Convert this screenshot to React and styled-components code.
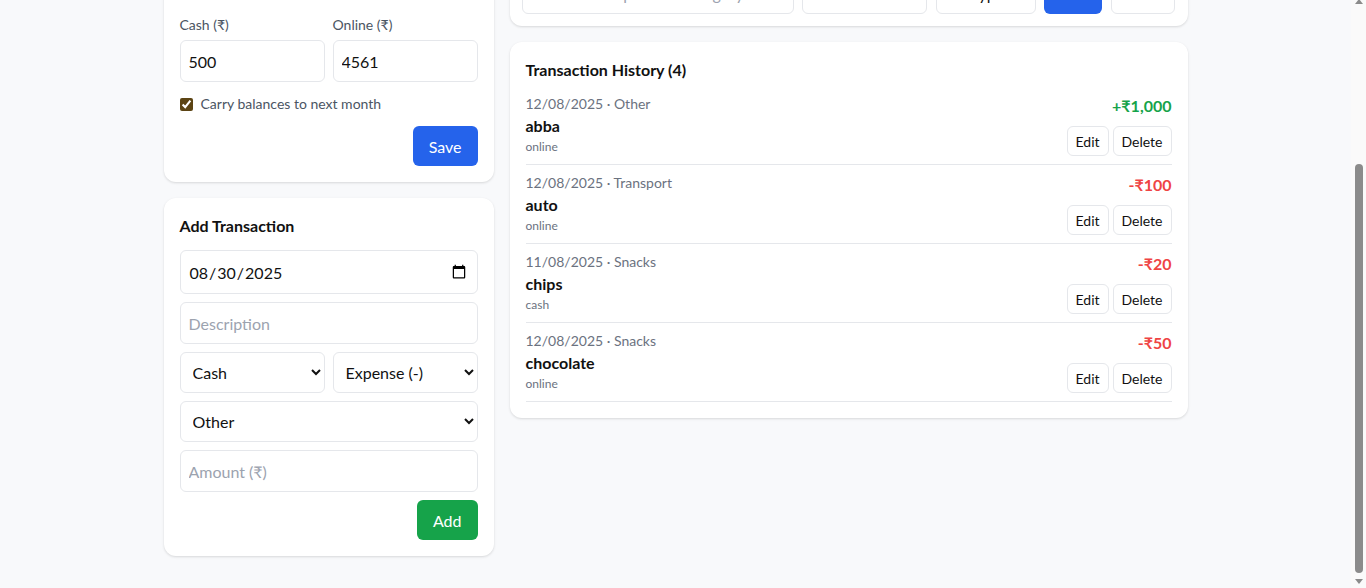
import React, { useLayoutEffect } from "react";
import styled, { createGlobalStyle } from "styled-components";

const GlobalStyle = createGlobalStyle`
  html {
    background: #f8f9fb;
  }
  body {
    margin: 0;
    background: #f8f9fb;
    font-family: Lato, "Noto Sans", "DejaVu Sans", sans-serif;
    line-height: 1.5;
    color: #111827;
  }
  * {
    box-sizing: border-box;
  }
`;

const Outer = styled.div`
  padding-right: 15px;
`;

const Page = styled.div`
  max-width: 1024px;
  margin: 0 auto;
  padding: 24px 0 32px;
`;

const Header = styled.h1`
  margin: 0 0 16px;
  font-size: 28px;
  line-height: 40px;
  font-weight: 700;
`;

const Summary = styled.div`
  display: grid;
  grid-template-columns: repeat(3, 1fr);
  gap: 16px;
  margin-bottom: 16px;
`;

const StatCard = styled.div`
  background: #fff;
  border-radius: 12px;
  box-shadow: 0 1px 3px rgba(0, 0, 0, 0.08);
  height: 78px;
  padding: 14px 16px;
  font-size: 14px;
  color: #4b5563;

  strong {
    display: block;
    font-size: 20px;
    color: #111827;
  }
`;

const Columns = styled.div`
  display: grid;
  grid-template-columns: 330px 1fr;
  gap: 16px;
  align-items: start;
`;

const Stack = styled.div`
  display: flex;
  flex-direction: column;
  gap: 16px;
`;

const Card = styled.div`
  background: #fff;
  border-radius: 12px;
  box-shadow: 0 1px 3px rgba(0, 0, 0, 0.1), 0 1px 2px rgba(0, 0, 0, 0.04);
  padding: ${(p) => p.$pad || "16px"};
`;

const CardTitle = styled.h2`
  margin: 0 0 ${(p) => p.$mb || "12px"};
  font-size: 16px;
  line-height: 24px;
  font-weight: 700;
  color: #111;
`;

const TwoCol = styled.div`
  display: grid;
  grid-template-columns: 1fr 1fr;
  gap: 8px;
`;

const Field = styled.label`
  display: flex;
  flex-direction: column;
  gap: 5px;
  font-size: 14px;
  line-height: 20px;
  color: #4b5563;
`;

const Input = styled.input`
  width: 100%;
  height: ${(p) => p.$h || "42px"};
  padding: 8px;
  border: 1px solid #e5e7eb;
  border-radius: 6px;
  background: #fff;
  font-family: inherit;
  font-size: 16px;
  color: #111;
  outline: none;

  &::placeholder {
    color: #9ca3af;
  }
`;

const Select = styled.select`
  width: 100%;
  height: ${(p) => p.$h || "41px"};
  padding: 8px;
  border: 1px solid #e5e7eb;
  border-radius: 6px;
  background: #fff;
  font-family: inherit;
  font-size: 16px;
  color: #111;
  outline: none;
`;

const CheckRow = styled.label`
  display: flex;
  align-items: center;
  gap: 8px;
  margin-top: 12px;
  font-size: 14px;
  line-height: 20px;
  color: #4b5563;

  input {
    margin: 0;
    width: 13px;
    height: 13px;
    accent-color: #5c4414;
  }
`;

const Actions = styled.div`
  display: flex;
  justify-content: flex-end;
  margin-top: ${(p) => p.$mt || "12px"};
`;

const Button = styled.button`
  height: 40px;
  padding: 0 16px;
  border: none;
  border-radius: 6px;
  background: ${(p) => (p.$green ? "#16a34a" : "#2563eb")};
  color: #fff;
  font-family: inherit;
  font-size: 16px;
  cursor: pointer;
`;

const Form = styled.div`
  display: flex;
  flex-direction: column;
  gap: 8px;
`;

const FilterRow = styled.div`
  display: grid;
  grid-template-columns: 272px 125px 100px 58px 64px;
  gap: 8px;
  justify-content: space-between;
`;

const FilterButton = styled.button`
  height: 42px;
  border: ${(p) => (p.$primary ? "none" : "1px solid #e5e7eb")};
  border-radius: 6px;
  background: ${(p) => (p.$primary ? "#2563eb" : "#fff")};
  color: ${(p) => (p.$primary ? "#fff" : "#111")};
  font-family: inherit;
  font-size: 16px;
`;

const List = styled.div`
  margin-top: 4px;
`;

const Item = styled.div`
  display: flex;
  justify-content: space-between;
  padding: 8px 0;
  border-bottom: 1px solid #e5e7eb;
`;

const Meta = styled.div`
  font-size: 14px;
  line-height: 20px;
  color: #6b7280;
`;

const Name = styled.div`
  font-size: 16px;
  line-height: 24px;
  font-weight: 700;
  color: #111;
`;

const Mode = styled.div`
  font-size: 12px;
  line-height: 17px;
  color: #6b7280;
`;

const Right = styled.div`
  display: flex;
  flex-direction: column;
  align-items: flex-end;
  gap: 8px;
`;

const Amount = styled.div`
  font-size: 16px;
  line-height: 24px;
  font-weight: 700;
  color: ${(p) => (p.$income ? "#16a34a" : "#ef4444")};
`;

const SmallButtons = styled.div`
  display: flex;
  gap: 4px;
`;

const SmallButton = styled.button`
  height: 30px;
  padding: 0 8px;
  border: 1px solid #e5e7eb;
  border-radius: 6px;
  background: #fff;
  color: #111;
  font-family: inherit;
  font-size: 14px;
`;

/* the browser's own scrollbar, as it shows in the screenshot */
const ScrollTrack = styled.div`
  position: fixed;
  top: 0;
  right: 0;
  width: 15px;
  height: 100vh;
  background: #fafafa;
  display: flex;
  flex-direction: column;
  align-items: center;
  justify-content: space-between;
`;

const Arrow = styled.div`
  width: 0;
  height: 0;
  margin: ${(p) => (p.$up ? "-1px 0 0" : "0 0 4px")};
  border-left: 4px solid transparent;
  border-right: 4px solid transparent;
  ${(p) => (p.$up ? "border-bottom" : "border-top")}: 5px solid #8b8b8b;
`;

const Thumb = styled.div`
  width: 8px;
  height: 409px;
  margin-top: auto;
  margin-bottom: 6px;
  border-radius: 4px;
  background: #8b8b8b;
`;

const transactions = [
  { date: "12/08/2025", cat: "Other", name: "abba", mode: "online", amount: "+₹1,000", income: true },
  { date: "12/08/2025", cat: "Transport", name: "auto", mode: "online", amount: "-₹100" },
  { date: "11/08/2025", cat: "Snacks", name: "chips", mode: "cash", amount: "-₹20" },
  { date: "12/08/2025", cat: "Snacks", name: "chocolate", mode: "online", amount: "-₹50" },
];

export default function App() {
  useLayoutEffect(() => {
    window.scrollTo(0, document.documentElement.scrollHeight);
  }, []);

  return (
    <Outer>
      <GlobalStyle />
      <Page>
        <Header>Expense Tracker</Header>
        <Summary>
          <StatCard>Cash<strong>₹500</strong></StatCard>
          <StatCard>Online<strong>₹4,561</strong></StatCard>
          <StatCard>Total<strong>₹5,061</strong></StatCard>
        </Summary>
        <Columns>
          <Stack>
            <Card>
              <CardTitle $mb="15px">Opening Balance</CardTitle>
              <TwoCol>
                <Field>
                  Cash (₹)
                  <Input defaultValue="500" />
                </Field>
                <Field>
                  Online (₹)
                  <Input defaultValue="4561" />
                </Field>
              </TwoCol>
              <CheckRow>
                <input type="checkbox" defaultChecked />
                Carry balances to next month
              </CheckRow>
              <Actions>
                <Button>Save</Button>
              </Actions>
            </Card>

            <Card>
              <CardTitle>Add Transaction</CardTitle>
              <Form>
                <Input type="date" defaultValue="2025-08-30" $h="44px" />
                <Input placeholder="Description" />
                <TwoCol>
                  <Select defaultValue="cash">
                    <option value="cash">Cash</option>
                    <option value="online">Online</option>
                  </Select>
                  <Select defaultValue="expense">
                    <option value="expense">Expense (-)</option>
                    <option value="income">Income (+)</option>
                  </Select>
                </TwoCol>
                <Select defaultValue="Other">
                  <option>Food</option>
                  <option>Snacks</option>
                  <option>Transport</option>
                  <option>Other</option>
                </Select>
                <Input placeholder="Amount (₹)" />
              </Form>
              <Actions $mt="8px">
                <Button $green>Add</Button>
              </Actions>
            </Card>
          </Stack>

          <Stack>
            <Card $pad="12px 13px 12px 12px">
              <FilterRow>
                <Input placeholder="Search description or category" />
                <Select $h="42px">
                  <option>All Modes</option>
                </Select>
                <Select $h="42px">
                  <option>All Types</option>
                </Select>
                <FilterButton $primary>Filter</FilterButton>
                <FilterButton>Reset</FilterButton>
              </FilterRow>
            </Card>

            <Card>
              <CardTitle $mb="0">Transaction History ({transactions.length})</CardTitle>
              <List>
                {transactions.map((t, i) => (
                  <Item key={i}>
                    <div>
                      <Meta>
                        {t.date} · {t.cat}
                      </Meta>
                      <Name>{t.name}</Name>
                      <Mode>{t.mode}</Mode>
                    </div>
                    <Right>
                      <Amount $income={t.income}>{t.amount}</Amount>
                      <SmallButtons>
                        <SmallButton>Edit</SmallButton>
                        <SmallButton>Delete</SmallButton>
                      </SmallButtons>
                    </Right>
                  </Item>
                ))}
              </List>
            </Card>
          </Stack>
        </Columns>
      </Page>
      <ScrollTrack>
        <Arrow $up />
        <Thumb />
        <Arrow />
      </ScrollTrack>
    </Outer>
  );
}
